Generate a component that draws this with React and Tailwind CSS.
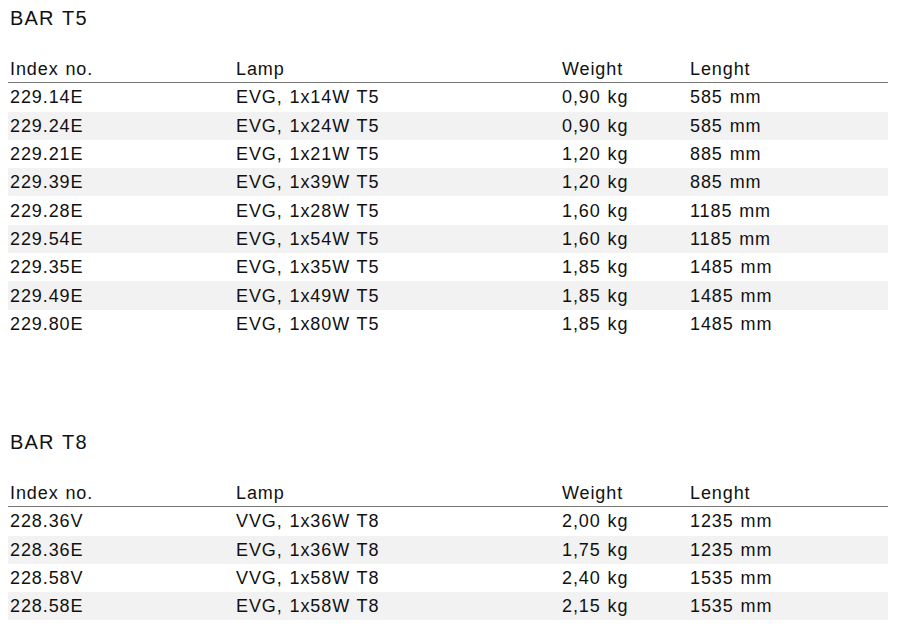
const sections = [
  {
    title: 'BAR T5',
    rows: [
      ['229.14E', 'EVG, 1x14W T5', '0,90 kg', '585 mm'],
      ['229.24E', 'EVG, 1x24W T5', '0,90 kg', '585 mm'],
      ['229.21E', 'EVG, 1x21W T5', '1,20 kg', '885 mm'],
      ['229.39E', 'EVG, 1x39W T5', '1,20 kg', '885 mm'],
      ['229.28E', 'EVG, 1x28W T5', '1,60 kg', '1185 mm'],
      ['229.54E', 'EVG, 1x54W T5', '1,60 kg', '1185 mm'],
      ['229.35E', 'EVG, 1x35W T5', '1,85 kg', '1485 mm'],
      ['229.49E', 'EVG, 1x49W T5', '1,85 kg', '1485 mm'],
      ['229.80E', 'EVG, 1x80W T5', '1,85 kg', '1485 mm'],
    ],
  },
  {
    title: 'BAR T8',
    rows: [
      ['228.36V', 'VVG, 1x36W T8', '2,00 kg', '1235 mm'],
      ['228.36E', 'EVG, 1x36W T8', '1,75 kg', '1235 mm'],
      ['228.58V', 'VVG, 1x58W T8', '2,40 kg', '1535 mm'],
      ['228.58E', 'EVG, 1x58W T8', '2,15 kg', '1535 mm'],
    ],
  },
]

const Row = ({ cells, className }) => (
  <div className={`flex items-center h-[28.3px] pl-[2px] pt-[1px] ${className}`}>
    <div className="w-[226px]">{cells[0]}</div>
    <div className="w-[326px]">{cells[1]}</div>
    <div className="w-[128px]">{cells[2]}</div>
    <div>{cells[3]}</div>
  </div>
)

const App = () => {
  return (
    <div
      className="w-[900px] h-[628px] bg-white text-[#111] overflow-hidden pt-[7px] pl-[8px] pr-[12px] text-[18px] tracking-[0.05em] [word-spacing:1px]"
      style={{ fontFamily: '"Liberation Sans", Arial, sans-serif' }}
    >
      {sections.map((section, i) => (
        <div key={section.title} className={i > 0 ? 'mt-[93px]' : ''}>
          <h2 className="pl-[2px] text-[20px] leading-[22px] tracking-[0.06em]">{section.title}</h2>

          <Row
            cells={['Index no.', 'Lamp', 'Weight', 'Lenght']}
            className="mt-[26px] border-b border-[#777]"
          />
          {section.rows.map((row, j) => (
            <Row
              key={row[0] + j}
              cells={row}
              className={j % 2 === 1 ? 'bg-[#f2f2f3]' : ''}
            />
          ))}
        </div>
      ))}
    </div>
  )
}

export default App
